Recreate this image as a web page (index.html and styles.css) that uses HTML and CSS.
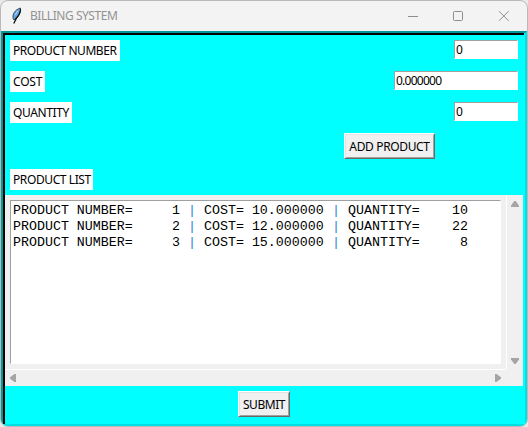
FILE: index.html
```html
<!DOCTYPE html>
<html lang="en">
<head>
<meta charset="utf-8">
<title>BILLING SYSTEM</title>
<link rel="stylesheet" href="styles.css">
</head>
<body>
<div class="window">
  <header class="titlebar">
    <svg class="feather" width="12" height="18" viewBox="0 0 12 18"><path d="M2.500 12.500C.8 8 3.500 3 9.300 1c1 3-.8 8-4.800 11.500z" fill="#65a5e5" stroke="#26394c" stroke-width=".9"/><path d="M5.500 11L2.800 16.500" fill="none" stroke="#111" stroke-width="1.300"/><path d="M9.500 2C9.500 6 7.500 9 4.500 12" fill="none" stroke="#111" stroke-width="1.200"/><path d="M4 8l3-4.500" stroke="#b4dcff"/></svg>
    <span class="title">BILLING SYSTEM</span>
    <svg class="controls" width="104" height="12" viewBox="0 0 104 12" fill="none" stroke="#8d8d8d"><path d="M0 6.500h10"/><rect x="45.500" y="1.500" width="9" height="9" rx="1"/><path d="M91 1.200l9.600 9.600M100.600 1.200L91 10.800"/></svg>
  </header>
  <main class="frame">
    <div class="row"><label class="label number">PRODUCT NUMBER</label><div class="entry">0</div></div>
    <div class="row"><label class="label cost">COST</label><div class="entry wide">0.000000</div></div>
    <div class="row"><label class="label quantity">QUANTITY</label><div class="entry">0</div></div>
    <div class="row add-row"><button class="button add">ADD PRODUCT</button></div>
    <div class="row"><label class="label list">PRODUCT LIST</label></div>
    <section class="list-frame">
      <div class="list-cell">
        <div class="listbox">
          <div class="item"><span>PRODUCT NUMBER=</span><span class="value">1</span><span class="bar">|</span><span>COST= 10.000000</span><span class="bar">|</span><span>QUANTITY=</span><span class="value">10</span></div>
          <div class="item"><span>PRODUCT NUMBER=</span><span class="value">2</span><span class="bar">|</span><span>COST= 12.000000</span><span class="bar">|</span><span>QUANTITY=</span><span class="value">22</span></div>
          <div class="item"><span>PRODUCT NUMBER=</span><span class="value">3</span><span class="bar">|</span><span>COST= 15.000000</span><span class="bar">|</span><span>QUANTITY=</span><span class="value">8</span></div>
        </div>
      </div>
      <div class="scroll vertical">
        <svg width="8" height="6"><path d="M3.300 0h1.400L8 4.500V6H0V4.500z"/></svg>
        <svg width="8" height="6"><path d="M0 0h8v1.500L4.700 6H3.300L0 1.500z"/></svg>
      </div>
      <div class="scroll horizontal">
        <svg width="6" height="8"><path d="M6 0H4.500L0 3.300v1.400L4.500 8H6z"/></svg>
        <svg width="6" height="8"><path d="M0 0h1.500L6 3.300v1.400L1.500 8H0z"/></svg>
      </div>
    </section>
    <div class="submit-row"><button class="button submit">SUBMIT</button></div>
  </main>
</div>
</body>
</html>
```
FILE: styles.css
```css
* { box-sizing: border-box; }
body {
  margin: 0;
  height: 427px;
  overflow: hidden;
  background: #e8e8e8;
  font-family: "Noto Sans", sans-serif;
  font-size: 12px;
  color: #000;
}
.window {
  width: 528px;
  height: 427px;
  display: flex;
  flex-direction: column;
  border: 1px solid #b9b9b9;
  border-radius: 8px;
  overflow: hidden;
  background: #f3f3f3;
}
.titlebar {
  height: 30px;
  flex: none;
  display: flex;
  align-items: center;
  padding: 0 15px 0 10px;
  color: #929292;
}
.feather { flex: none; margin-right: 7px; }
.title { flex: 1; letter-spacing: -0.45px; line-height: 18px; white-space: nowrap; }
.controls { flex: none; }
.frame {
  flex: 1;
  display: flex;
  flex-direction: column;
  border: 2px solid;
  border-color: #00999a #00e0e3 #00e0e3 #00999a;
  box-shadow: inset -1px 0 #00ffff, inset 2px 2px #000;
  background: #00ffff;
  padding: 2px 0 0 2px;
}
.row {
  height: 31px;
  flex: none;
  display: flex;
  justify-content: space-between;
  align-items: flex-start;
  padding: 5px 7px 0 5px;
}
.label {
  height: 21px;
  background: #fff;
  padding-left: 3px;
  line-height: 21px;
  white-space: nowrap;
}
.number { width: 110px; letter-spacing: -0.45px; }
.cost { width: 35px; letter-spacing: -0.2px; }
.quantity { width: 62px; letter-spacing: -0.4px; }
.list { width: 83px; letter-spacing: -0.4px; }
.entry {
  width: 64px;
  height: 19px;
  background: #fff;
  border: 1px solid;
  border-color: #a0a0a0 #fff #fff #a0a0a0;
  padding-left: 1px;
  line-height: 18px;
}
.wide { width: 124px; letter-spacing: -0.75px; }
.add-row { height: 36px; justify-content: flex-end; padding-right: 90px; }
.button {
  height: 26px;
  margin: 0;
  padding: 0;
  background: #f0f0f0;
  border: 1px solid;
  border-color: #fff #696969 #696969 #fff;
  box-shadow: inset 1px 1px #e3e3e3, inset -1px -1px #a0a0a0;
  font: inherit;
  line-height: 23px;
  color: #000;
  white-space: nowrap;
}
.add { width: 91px; letter-spacing: -0.35px; }
.submit { width: 52px; letter-spacing: -0.45px; }
.list-frame {
  width: 518px;
  height: 191px;
  flex: none;
  display: grid;
  grid-template-columns: 501px 17px;
  grid-template-rows: 174px 17px;
  background: #f0f0f0;
}
.list-cell { padding: 5px; }
.listbox {
  width: 491px;
  height: 164px;
  padding: 2px;
  background: #fff;
  border: 1px solid;
  border-color: #a0a0a0 #fff #fff #a0a0a0;
  font: 13.3px/16px "Liberation Mono", monospace;
}
.item {
  height: 16px;
  display: grid;
  grid-template-columns: 120px 47px 24px 120px 24px 72px 48px;
  white-space: nowrap;
}
.value { text-align: right; }
.bar { text-align: center; color: #2d86cf; }
.scroll { display: flex; justify-content: space-between; align-items: center; fill: #a5a5a5; }
.scroll svg { display: block; }
.vertical { flex-direction: column; border-left: 1px solid #fff; padding: 6px 0 5px; }
.horizontal { border-top: 1px solid #fff; padding: 0 5px; }
.submit-row { display: flex; justify-content: center; padding: 5px 2px 0 0; }
```
